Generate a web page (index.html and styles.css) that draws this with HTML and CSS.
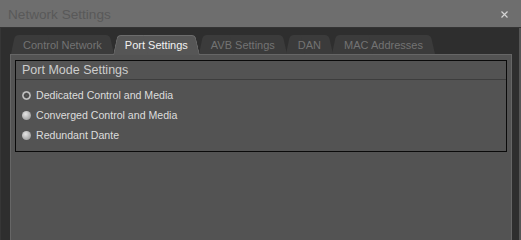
FILE: index.html
```html
<!DOCTYPE html>
<html>
<head>
<meta charset="utf-8">
<title>Network Settings</title>
<link rel="stylesheet" href="styles.css">
</head>
<body>
<div class="window">
  <div class="titlebar">
    <span class="title">Network Settings</span>
    <svg class="close" width="7" height="7" viewBox="0 0 7 7"><path d="M0.5 0.5L6.5 6.5M6.5 0.5L0.5 6.5" stroke="#d4d4d4" stroke-width="1.2" fill="none"/></svg>
  </div>
  <div class="content">
    <div class="tabs">
      <div class="tab">Control Network</div>
      <div class="tab active">Port Settings</div>
      <div class="tab">AVB Settings</div>
      <div class="tab">DAN</div>
      <div class="tab">MAC Addresses</div>
    </div>
    <div class="panel">
      <div class="group">
        <div class="group-head">Port Mode Settings</div>
        <div class="group-body">
          <div class="option"><span class="radio checked"></span>Dedicated Control and Media</div>
          <div class="option"><span class="radio"></span>Converged Control and Media</div>
          <div class="option"><span class="radio"></span>Redundant Dante</div>
        </div>
      </div>
    </div>
  </div>
</div>
</body>
</html>
```
FILE: styles.css
```css
html, body {
  margin: 0;
  padding: 0;
  height: 100%;
  background: #2e2e2e;
}

.window {
  width: 521px;
  height: 100%;
  min-height: 201px;
  box-sizing: border-box;
  display: flex;
  flex-direction: column;
  overflow: hidden;
  font-family: "Liberation Sans", Arial, sans-serif;
  background: #2e2e2e;
}

.titlebar {
  height: 28px;
  box-sizing: border-box;
  padding: 2px 13px 0 8px;
  border-bottom: 1px solid #343434;
  background: #6e6e6e;
  display: flex;
  align-items: center;
  justify-content: space-between;
  flex: none;
}

.title {
  font-size: 13.6px;
  line-height: 24px;
  color: #595959;
}

.close {
  display: block;
  margin-top: -1px;
}

.content {
  flex: 1;
  display: flex;
  flex-direction: column;
  padding: 7px 7px 0 9px;
  border-left: 1px solid #363636;
  border-right: 2px solid #555555;
}

.tabs {
  display: flex;
  align-items: flex-start;
  height: 19px;
  padding-left: 1px;
  flex: none;
}

.tab {
  position: relative;
  z-index: 1;
  height: 19px;
  box-sizing: border-box;
  padding: 2px 12px 0;
  line-height: 17px;
  font-size: 11px;
  color: #737373;
  white-space: nowrap;
}

.tab + .tab {
  margin-left: -1px;
}

.tab::before,
.tab::after {
  content: "";
  position: absolute;
  top: 0;
  bottom: 0;
  width: 60%;
  background: #3b3b3b;
  z-index: -1;
  box-sizing: border-box;
}

.tab::before {
  left: 0;
  border-radius: 4px 0 0 0;
  transform: skewX(-12deg);
  transform-origin: 0 100%;
}

.tab::after {
  right: 0;
  border-radius: 0 4px 0 0;
  transform: skewX(13deg);
  transform-origin: 100% 100%;
}

.tab.active {
  z-index: 3;
  height: 20px;
  color: #f2f2f2;
}

.tab.active::before,
.tab.active::after {
  background: #565656;
  border-top: 1px solid #6c6c6c;
}

.tab.active::before {
  border-left: 1px solid #6c6c6c;
}

.tab.active::after {
  border-right: 1px solid #6c6c6c;
}

.panel {
  flex: 1;
  background: #535353;
  border: 1px solid #666666;
  border-bottom: none;
  padding: 5px 4px 0 4px;
}

.group {
  border: 1px solid #0a0a0a;
}

.group-head {
  height: 18px;
  line-height: 18px;
  padding-left: 6px;
  font-size: 12.5px;
  color: #cdcdcd;
  border-bottom: 1px solid #3d3d3d;
}

.group-body {
  padding: 5px 0 6px 6px;
}

.option {
  height: 20px;
  display: flex;
  align-items: center;
  font-size: 10.6px;
  color: #dddddd;
}

.radio {
  width: 9px;
  height: 9px;
  border-radius: 50%;
  margin-right: 5px;
  flex: none;
  background: radial-gradient(circle at 40% 35%, #e4e4e4 0, #bcbcbc 45%, #8e8e8e 100%);
}

.radio.checked {
  background: radial-gradient(circle at 50% 50%, #5a5a5a 0, #444444 2px, #8a8a8a 2.8px, #d0d0d0 3.4px, #a0a0a0 4.5px);
}
```
